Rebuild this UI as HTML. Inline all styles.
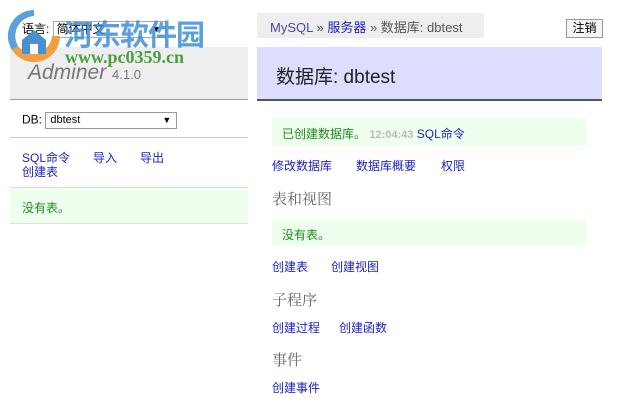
<!DOCTYPE html>
<html><head><meta charset="utf-8"><style>
body{margin:0;width:624px;height:405px;background:#fff;position:relative;overflow:hidden;font-family:"Liberation Sans","Noto Sans CJK SC",sans-serif;font-size:12px;color:#000}
.a{position:absolute;white-space:nowrap}
a,.l{color:#2020c0;text-decoration:none}
.h2{font-family:"Liberation Serif","Noto Serif CJK SC",serif;font-size:15px;color:#666}
.g{color:#228822}
</style></head><body>
<!-- left -->
<div class="a" style="left:10px;top:47px;width:238px;height:52px;background:#eee;border-bottom:1px solid #999"></div>
<div class="a" style="left:28px;top:61px;font-size:21px;font-style:italic;color:#777">Adminer <span style="font-size:13px;font-style:normal">4.1.0</span></div>
<div class="a" style="left:22px;top:20px;font-size:12px">语言: <span style="display:inline-block;width:108px;height:15px;border:1px solid #aaa;vertical-align:middle;font-size:12px;line-height:15px;padding-left:3px">简体中文<span style="float:right;margin-right:4px;font-size:9px">▼</span></span></div>
<div class="a" style="left:10px;top:100px;width:238px;height:37px;border-bottom:1px solid #ccc"></div>
<div class="a" style="left:22px;top:112px;font-size:12px">DB: <span style="display:inline-block;width:126px;height:15px;border:1px solid #999;vertical-align:middle;font-size:11px;line-height:15px;padding-left:4px">dbtest<span style="float:right;margin-right:5px;font-size:9px">▼</span></span></div>
<div class="a l" style="left:22px;top:149px">SQL命令</div>
<div class="a l" style="left:93px;top:149px">导入</div>
<div class="a l" style="left:140px;top:149px">导出</div>
<div class="a l" style="left:22px;top:163px">创建表</div>
<div class="a" style="left:10px;top:187px;width:238px;height:35px;background:#efe;border-top:1px solid #ddd;border-bottom:1px solid #ddd"></div>
<div class="a g" style="left:22px;top:199px">没有表。</div>
<!-- watermark -->
<svg class="a" style="left:4px;top:6px" width="60" height="58" viewBox="0 0 60 58">
<path d="M30 4 A26 26 0 0 0 8 44 L14 40 A20 20 0 0 1 30 10Z" fill="#5aa0dc"/>
<path d="M8 44 A26 26 0 0 0 56 30 L48 30 A19 19 0 0 1 14 40Z" fill="#f0a040"/>
<path d="M18 48 L18 34 L30 24 L42 34 L42 48Z" fill="#4a90d0"/>
<rect x="26" y="38" width="8" height="10" fill="#fff"/>
</svg>
<div class="a" style="left:64px;top:12px;font-size:29px;font-weight:bold;color:#3f8fd8;opacity:.85;letter-spacing:-1px">河东软件园</div>
<div class="a" style="left:65px;top:47px;font-family:'Liberation Serif',serif;font-size:18px;font-weight:bold;color:#4aa040">www.pc0359.cn</div>
<!-- right -->
<div class="a" style="left:257px;top:13px;width:227px;height:25px;background:#eee"></div>
<div class="a" style="left:270px;top:17px;font-size:13px;color:#555"><span style="color:#4a4aa0">MySQL</span> » <span class="l">服务器</span> » 数据库: dbtest</div>
<div class="a" style="left:566px;top:19px;width:35px;height:17px;border:1px solid #999;background:#f4f4f4;font-size:12px;line-height:17px;text-align:center">注销</div>
<div class="a" style="left:257px;top:47px;width:345px;height:52px;background:#ddf;border-bottom:2px solid #555"></div>
<div class="a" style="left:276px;top:62px;font-size:19px;color:#222">数据库: dbtest</div>
<div class="a" style="left:272px;top:118px;width:314px;height:28px;background:#efe"></div>
<div class="a" style="left:282px;top:125px"><span class="g">已创建数据库。</span> <span style="color:#bbb;font-size:11px;font-weight:bold">12:04:43</span> <span class="l" style="font-size:12px">SQL命令</span></div>
<div class="a l" style="left:272px;top:157px">修改数据库</div>
<div class="a l" style="left:356px;top:157px">数据库概要</div>
<div class="a l" style="left:441px;top:157px">权限</div>
<div class="a h2" style="left:272px;top:188px">表和视图</div>
<div class="a" style="left:272px;top:219px;width:314px;height:27px;background:#efe"></div>
<div class="a g" style="left:282px;top:226px">没有表。</div>
<div class="a l" style="left:272px;top:258px">创建表</div>
<div class="a l" style="left:331px;top:258px">创建视图</div>
<div class="a h2" style="left:272px;top:289px">子程序</div>
<div class="a l" style="left:272px;top:319px">创建过程</div>
<div class="a l" style="left:339px;top:319px">创建函数</div>
<div class="a h2" style="left:272px;top:349px">事件</div>
<div class="a l" style="left:272px;top:379px">创建事件</div>
</body></html>
